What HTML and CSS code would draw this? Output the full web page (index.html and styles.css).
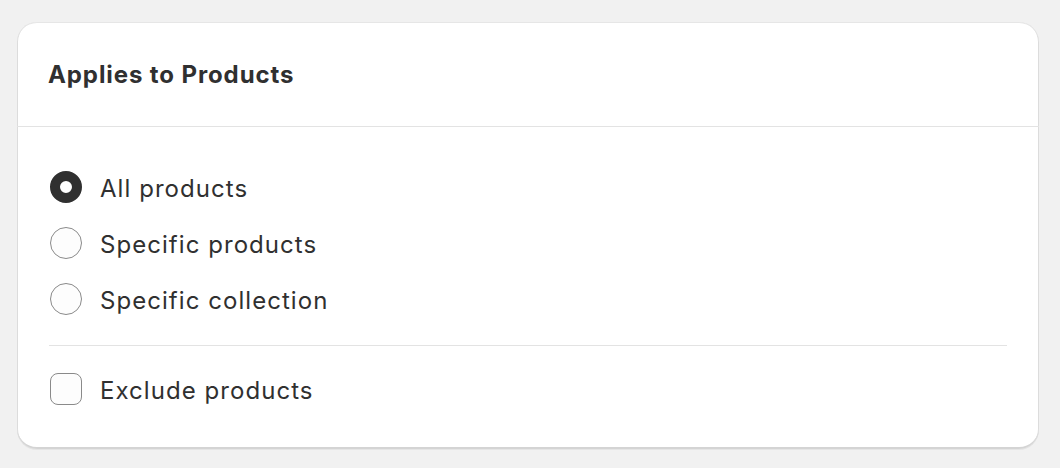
FILE: index.html
```html
<!DOCTYPE html>
<html>
<head>
<meta charset="utf-8">
<link rel="stylesheet" href="styles.css">
</head>
<body>
<div class="page">
  <section class="card">
    <header class="card-header">
      <h2 class="title">Applies to Products</h2>
    </header>
    <div class="card-body">
      <div class="options">
        <label class="option"><span class="radio checked"></span><span class="label">All products</span></label>
        <label class="option"><span class="radio"></span><span class="label">Specific products</span></label>
        <label class="option"><span class="radio"></span><span class="label">Specific collection</span></label>
      </div>
      <hr class="divider">
      <label class="option"><span class="checkbox"></span><span class="label">Exclude products</span></label>
    </div>
  </section>
</div>
</body>
</html>
```

FILE: styles.css
```css
html, body {
  margin: 0;
  padding: 0;
  background: #f1f1f1;
}
body {
  font-family: Inter, "Noto Sans", sans-serif;
  color: #303030;
}
.page {
  padding: 22px 21px 19px 17px;
}
.card {
  background: #fff;
  border-radius: 20px;
  height: 427px;
  box-sizing: border-box;
  box-shadow: inset 0 1px 0 0 #e6e6e6, inset 1px 0 0 0 #dcdcdc, inset -1px 0 0 0 #dcdcdc, inset 0 -2px 0 0 #d4d4d4, 0 1px 0 0 rgba(26,26,26,0.05);
  overflow: hidden;
}
.card-header {
  height: 105px;
  box-sizing: border-box;
  padding: 0 32px;
  display: flex;
  align-items: center;
  border-bottom: 1px solid #e3e3e3;
}
.title {
  margin: 0;
  font-size: 24px;
  font-weight: 650;
  line-height: 1;
  letter-spacing: 0.9px;
  padding-top: 1px;
  margin-left: -1px;
}
.card-body {
  padding: 44px 32px 0;
}
.options {
  display: flex;
  flex-direction: column;
  gap: 24px;
}
.option {
  display: flex;
  align-items: center;
  gap: 18px;
  height: 32px;
  padding-left: 1px;
}
.label {
  font-size: 24px;
  font-weight: 400;
  line-height: 1;
  letter-spacing: 1.05px;
  padding-top: 3px;
}
.radio {
  width: 32px;
  height: 32px;
  box-sizing: border-box;
  border-radius: 50%;
  border: 1.5px solid #8a8a8a;
  background: #fdfdfd;
  flex: none;
}
.radio.checked {
  border: 10px solid #303030;
  background: #fff;
}
.checkbox {
  width: 32px;
  height: 32px;
  box-sizing: border-box;
  border-radius: 8px;
  border: 1.5px solid #8a8a8a;
  background: #fdfdfd;
  flex: none;
}
.divider {
  border: 0;
  border-top: 1px solid #e3e3e3;
  margin: 30px 0 27px;
  height: 0;
}
```
